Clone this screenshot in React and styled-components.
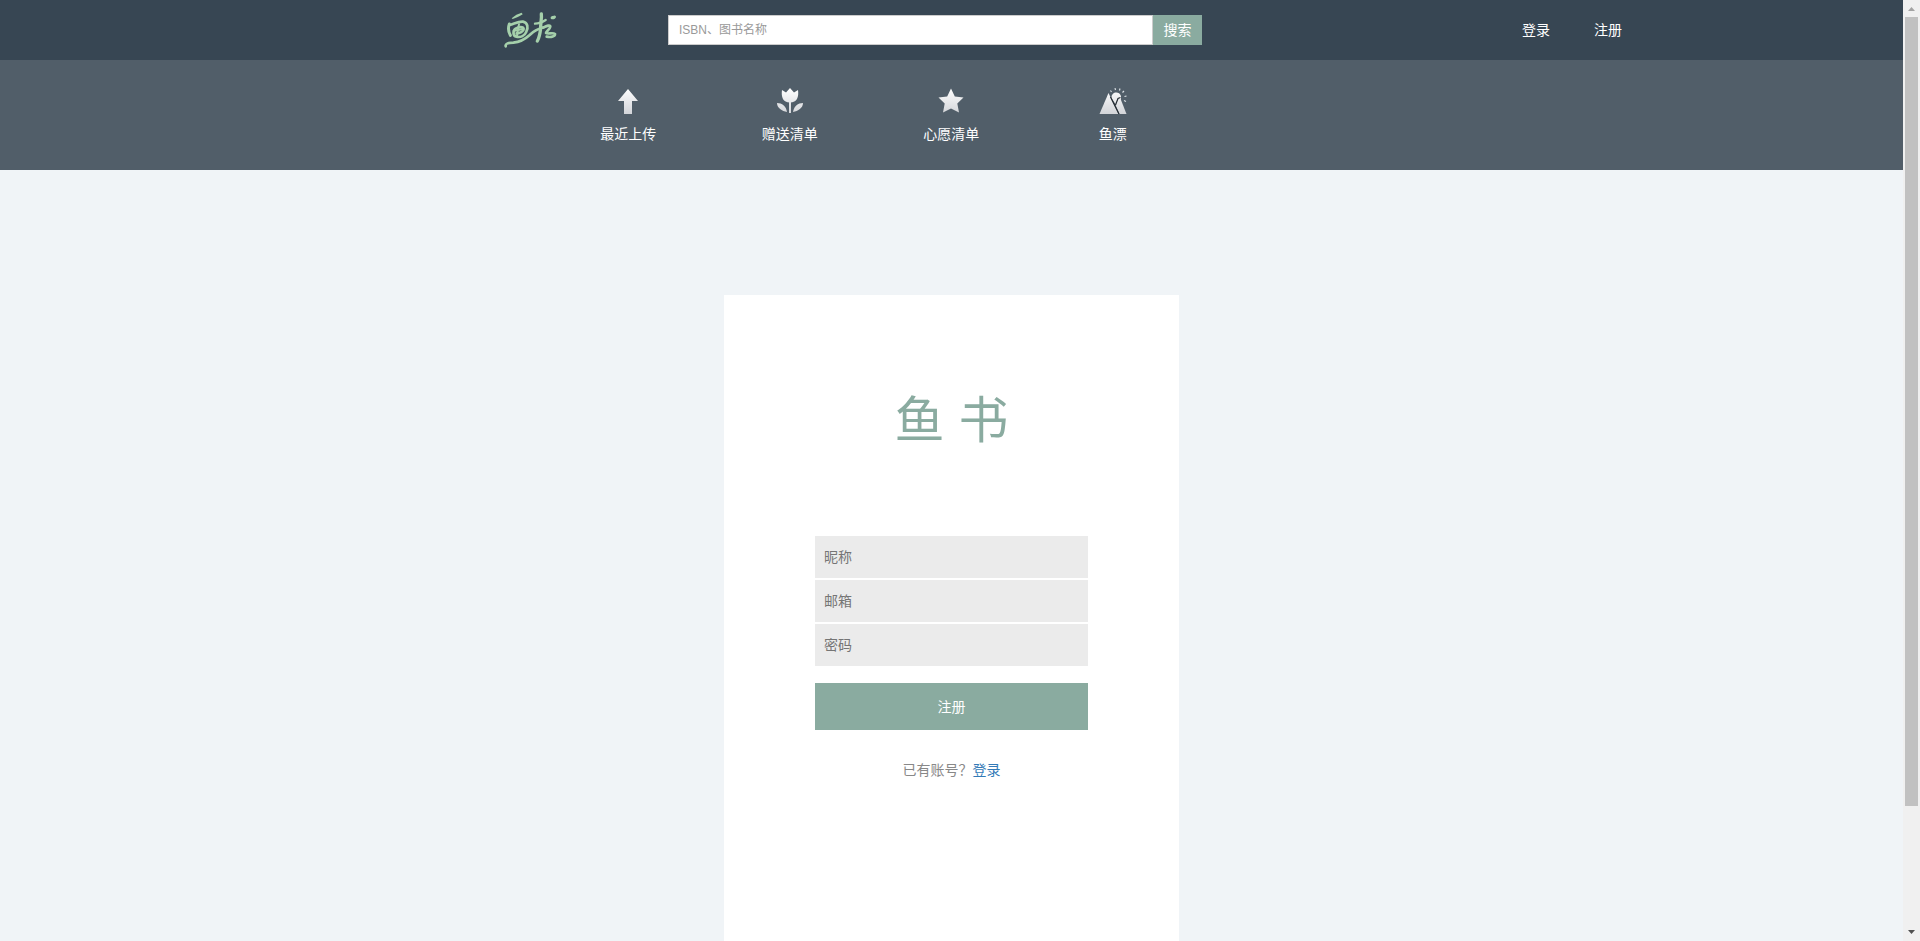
import React from "react";
import styled, { createGlobalStyle } from "styled-components";

const GlobalStyle = createGlobalStyle`
  *, *::before, *::after { box-sizing: border-box; }
  body {
    margin: 0;
    background: #f0f4f7;
    font-family: "Liberation Sans", "Noto Sans CJK SC", sans-serif;
    font-size: 14px;
    line-height: 20px;
    color: #888;
  }
  input, button { font: inherit; border: 0; border-radius: 0; margin: 0; }
  a { text-decoration: none; }
`;

const Frame = styled.div`
  display: flex;
  height: 100vh;
  overflow: hidden;
`;

const Page = styled.div`
  flex: 1;
  min-width: 0;
  display: flex;
  flex-direction: column;
`;

const Header = styled.header`
  flex: none;
  display: grid;
  grid-template-columns: 504fr 164fr 534fr 420fr 281fr;
  align-items: center;
  height: 60px;
  background: #374653;
`;

const LogoLink = styled.a`
  grid-column: 2;
  display: flex;
`;

const SearchForm = styled.form`
  grid-column: 3;
  display: flex;
  height: 30px;
`;

const SearchInput = styled.input`
  flex: 1;
  min-width: 0;
  padding: 0 10px;
  border: 1px solid #ccc;
  background: #fff;
  font-size: 12px;
  color: #555;
  &::placeholder { color: #999; opacity: 1; }
`;

const SearchButton = styled.button`
  width: 49px;
  padding: 0;
  background: #8aaba0;
  color: #fff;
  cursor: pointer;
`;

const AccountNav = styled.nav`
  grid-column: 4;
  display: flex;
  justify-content: flex-end;
  gap: 44px;
`;

const AccountLink = styled.a`
  color: #fff;
`;

const MenuBar = styled.nav`
  flex: none;
  display: grid;
  grid-template-columns: 1095fr repeat(4, 323fr) 1419fr;
  height: 110px;
  padding-top: 28px;
  background: #515e69;

  &::before { content: ""; }
`;

const MenuItem = styled.a`
  display: flex;
  flex-direction: column;
  align-items: center;
  gap: 10px;
  color: #fff;
`;

const MenuIcon = styled.svg`
  width: 28px;
  height: 26px;
`;

const Main = styled.main`
  flex: 1;
  display: flex;
  justify-content: center;
  padding-top: 125px;
`;

const Card = styled.section`
  width: 455px;
  padding: 91px 91px 0;
  background: #fff;
  text-align: center;
`;

const Title = styled.h1`
  margin: 0 0 80px;
  font-size: 50px;
  font-weight: 400;
  line-height: 70px;
  color: #8aaba0;
`;

const RegisterForm = styled.form`
  display: flex;
  flex-direction: column;
  gap: 2px;
`;

const Field = styled.input`
  width: 100%;
  height: 42px;
  padding: 0 9px;
  background: #ebebeb;
  color: #555;
  &::placeholder { color: #757575; opacity: 1; }
`;

const SubmitButton = styled.button`
  height: 47px;
  margin-top: 15px;
  background: #8aaba0;
  color: #fff;
  cursor: pointer;
`;

const Hint = styled.p`
  margin: 30px 0 0;
`;

const HintLink = styled.a`
  color: #337ab7;
`;

const ScrollTrack = styled.div`
  flex: none;
  width: 17px;
  display: flex;
  flex-direction: column;
  align-items: center;
  background: #f0f0f0;
`;

const ScrollArrow = styled.svg`
  flex: none;
  width: 17px;
  height: 17px;
  fill: ${(p) => p.$color};
`;

const ScrollLane = styled.div`
  flex: 1;
  width: 13px;
`;

const ScrollThumb = styled.div`
  height: 87%;
  background: #c1c1c1;
`;

const Logo = () => (
  <svg width="53" height="38" viewBox="41 32 159 114" fill="none" stroke="#a5d0ab" strokeLinecap="round" strokeLinejoin="round">
    <path d="M64 54 C73 45 83 40 94 37 L97 42 C87 49 78 53 67 56 Z" fill="#a5d0ab" stroke="none" />
    <path d="M57 71 C53 82 55 96 60 105" strokeWidth="9" />
    <path d="M58 74 C71 71 83 63 98 64 C113 67 114 83 108 94 C103 106 91 112 78 109 C67 107 67 91 76 85 C85 79 99 78 100 86 C100 94 88 99 79 99" strokeWidth="8" />
    <path d="M86 72 C83 84 82 98 80 107 M70 91 C80 90 90 88 98 86" strokeWidth="6" />
    <path d="M46 138 C44 129 55 127 69 127 C90 125 105 116 118 104 C131 91 145 85 160 81" strokeWidth="8" />
    <path d="M153 41 C155 56 150 70 151 84 C149 101 147 112 141 122" strokeWidth="10" />
    <path d="M134 70 C144 70 155 66 166 59" strokeWidth="7" />
    <path d="M158 82 C170 76 180 73 180 79 C179 87 167 93 167 98 C173 103 187 95 194 101 C195 108 183 112 169 109" strokeWidth="8" />
    <path d="M183 51 C188 47 195 47 195 50 C193 55 187 56 183 54 Z" fill="#a5d0ab" strokeWidth="4" />
  </svg>
);

const Gradient = ({ id }) => (
  <defs>
    <linearGradient id={id} x1="0" y1="0" x2="0" y2="26" gradientUnits="userSpaceOnUse">
      <stop offset="0" stopColor="#ffffff" />
      <stop offset="1" stopColor="#d2d4d8" />
    </linearGradient>
  </defs>
);

const ArrowIcon = () => (
  <MenuIcon viewBox="0 0 28 26" aria-hidden="true">
    <Gradient id="arrow" />
    <path fill="url(#arrow)" d="M14 1 L24 13 H18 V26 H10 V13 H4 Z" />
  </MenuIcon>
);

const TulipIcon = () => (
  <MenuIcon viewBox="0 0 28 26" aria-hidden="true">
    <Gradient id="tulip" />
    <g fill="url(#tulip)">
      <path d="M6 2 L10 4.5 L14 0 L18 4.5 L22 2 C23 9 21 14.5 14 14.5 C7 14.5 5 9 6 2 Z" />
      <rect x="13" y="14" width="2" height="11" />
      <path d="M1 15 C6 15 10 18 11 24 C6 23 1 20 1 15 Z" />
      <path d="M27 15 C22 15 18 18 17 24 C22 23 27 20 27 15 Z" />
    </g>
  </MenuIcon>
);

const StarIcon = () => (
  <MenuIcon viewBox="0 0 28 26" aria-hidden="true">
    <Gradient id="star" />
    <path fill="url(#star)" d="M14 0.5 L17.8 8.5 L26.5 9.5 L20.3 15.6 L22 24.5 L14 20.6 L6 24.5 L7.7 15.6 L1.5 9.5 L10.2 8.5 Z" />
  </MenuIcon>
);

const MountainIcon = () => (
  <MenuIcon viewBox="0 0 28 26" aria-hidden="true">
    <Gradient id="mountain" />
    <g fill="url(#mountain)">
      <path d="M12.5 10 C12 4 20 2.5 22 8 L22 11 L17 17 Z" />
      <path d="M0.5 26 L9.5 5 L19.5 26 Z" />
      <path d="M16.5 17 L19.5 9.5 H21 L27.5 26 H20.5 Z" />
    </g>
    <path d="M11.5 9 L20 26 M16.5 17 L19 10.5 L21.5 9.5" fill="none" stroke="#252c33" strokeWidth="1.2" />
    <path d="M11.5 2.5 L12.5 4 M16 0 L16.5 2 M21 0.5 L20.5 2.5 M25 3 L23.5 4.5 M27.5 8 L25.5 8.5 M27 13.5 L25 12.5" stroke="#dfe5e9" strokeWidth="1.1" />
  </MenuIcon>
);

const MENU = [
  { label: "最近上传", Icon: ArrowIcon },
  { label: "赠送清单", Icon: TulipIcon },
  { label: "心愿清单", Icon: StarIcon },
  { label: "鱼漂", Icon: MountainIcon },
];

const FIELDS = [
  { name: "nickname", type: "text", label: "昵称" },
  { name: "email", type: "email", label: "邮箱" },
  { name: "password", type: "password", label: "密码" },
];

export default function App() {
  const stop = (e) => e.preventDefault();
  return (
    <Frame>
      <GlobalStyle />
      <Page>
        <Header>
          <LogoLink href="#" aria-label="鱼书"><Logo /></LogoLink>
          <SearchForm role="search" onSubmit={stop}>
            <SearchInput name="q" aria-label="ISBN、图书名称" placeholder="ISBN、图书名称" />
            <SearchButton type="submit">搜索</SearchButton>
          </SearchForm>
          <AccountNav>
            <AccountLink href="#login">登录</AccountLink>
            <AccountLink href="#register">注册</AccountLink>
          </AccountNav>
        </Header>
        <MenuBar>
          {MENU.map(({ label, Icon }) => (
            <MenuItem key={label} href="#">
              <Icon />
              {label}
            </MenuItem>
          ))}
        </MenuBar>
        <Main>
          <Card>
            <Title>鱼 书</Title>
            <RegisterForm onSubmit={stop}>
              {FIELDS.map(({ name, type, label }) => (
                <Field key={name} name={name} type={type} aria-label={label} placeholder={label} />
              ))}
              <SubmitButton type="submit">注册</SubmitButton>
            </RegisterForm>
            <Hint>已有账号？<HintLink href="#login">登录</HintLink></Hint>
          </Card>
        </Main>
      </Page>
      <ScrollTrack aria-hidden="true">
        <ScrollArrow $color="#a3a3a3" viewBox="0 0 17 17"><path d="M5 11 L8.5 7 L12 11 Z" /></ScrollArrow>
        <ScrollLane><ScrollThumb /></ScrollLane>
        <ScrollArrow $color="#505050" viewBox="0 0 17 17"><path d="M5 6 L8.5 10 L12 6 Z" /></ScrollArrow>
      </ScrollTrack>
    </Frame>
  );
}
